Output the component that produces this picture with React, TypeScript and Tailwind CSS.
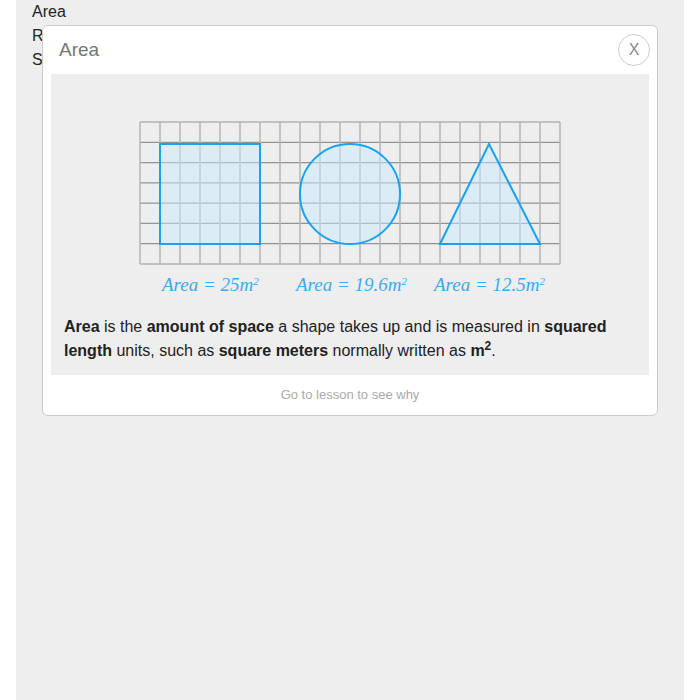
import React from "react";

const COLS = 21;
const ROWS = 7;
const W = 420;
const H = 142;

function ShapesGrid() {
  const cw = W / COLS;
  const rh = H / ROWS;
  const fill = "rgb(200,234,254)";
  return (
    <svg width={W + 2} height={H + 2} viewBox={`-1 -1 ${W + 2} ${H + 2}`} className="block">
      {Array.from({ length: ROWS + 1 }).map((_, i) => (
        <line key={"h" + i} x1={0} x2={W} y1={i * rh} y2={i * rh} stroke="#939393" strokeWidth={1.2} />
      ))}
      {Array.from({ length: COLS + 1 }).map((_, i) => (
        <line key={"v" + i} x1={i * cw} x2={i * cw} y1={0} y2={H} stroke="#b8b8b8" strokeWidth={1.6} />
      ))}
      <rect x={20} y={22} width={100} height={100} fill={fill} fillOpacity={0.5} stroke="#17a3f2" strokeWidth={2} />
      <circle cx={210} cy={72} r={50} fill={fill} fillOpacity={0.5} stroke="#17a3f2" strokeWidth={2} />
      <polygon points="300,122 349,22 400,122" fill={fill} fillOpacity={0.5} stroke="#17a3f2" strokeWidth={2} />
    </svg>
  );
}

function Label({ value }: { value: string }) {
  return (
    <span className="whitespace-nowrap text-[19px] italic text-[#3aabf2]" style={{ fontFamily: '"Liberation Serif", "DejaVu Serif", serif' }}>
      Area = {value}m<span className="text-[11px] align-[6px]">2</span>
    </span>
  );
}

export default function App() {
  return (
    <div className="bg-white min-h-[700px]" style={{ fontFamily: '"Liberation Sans", Arial, sans-serif' }}>
      <div className="mx-[16px] min-h-[700px] bg-[#eeeeee] px-[16px] text-[16px] leading-[24px] text-[#222]">
        <div>Area</div>
        <div>Rectangle</div>
        <div>Square</div>
      </div>

      <div className="absolute left-[42px] top-[25px] w-[616px] rounded-[6px] border border-[#cccccc] bg-white">
        <div className="flex h-[48px] items-center justify-between pl-[16px] pr-[7px]">
          <span className="text-[19px] text-[#777]">Area</span>
          <button className="flex h-[32px] w-[32px] items-center justify-center rounded-full border border-[#cccccc] text-[16px] text-[#888]">
            X
          </button>
        </div>
        <div className="mx-[8px] bg-[#eeeeee] px-[13px] pb-[12px] pt-[47px]">
          <div className="flex justify-center">
            <ShapesGrid />
          </div>
          <div className="relative mt-[6px] h-[26px]">
            <div className="absolute left-[98px] top-0"><Label value="25" /></div>
            <div className="absolute left-[232px] top-0"><Label value="19.6" /></div>
            <div className="absolute left-[370px] top-0"><Label value="12.5" /></div>
          </div>
          <p className="mt-[18px] text-[16px] leading-[24px] text-[#222]">
            <b>Area</b> is the <b>amount of space</b> a shape takes up and is measured in <b>squared length</b> units,
            such as <b>square meters</b> normally written as <b>m<sup>2</sup></b>.
          </p>
        </div>
        <div className="flex h-[40px] items-center justify-center text-[13px] text-[#aaa]">Go to lesson to see why</div>
      </div>
    </div>
  );
}
